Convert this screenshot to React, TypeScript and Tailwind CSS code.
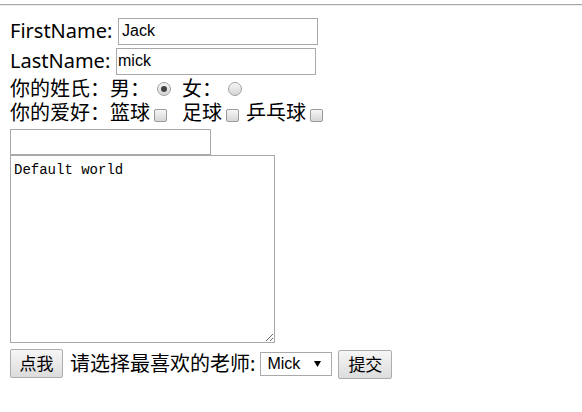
import React from 'react';

const cjk = '"Noto Sans", "Noto Sans CJK SC", sans-serif';

function Radio({ checked }: { checked?: boolean }) {
  return (
    <span className="flex h-[14px] w-[14px] shrink-0 items-center justify-center rounded-full border border-[#a0a0a0] bg-linear-to-b from-[#f6f6f6] to-[#d6d6d6]">
      {checked && <span className="block h-[6px] w-[6px] rounded-full bg-[#444]" />}
    </span>
  );
}

function Check() {
  return (
    <span className="mt-[4px] block h-[13px] w-[13px] shrink-0 rounded-[2px] border border-[#9a9a9a] bg-linear-to-b from-[#f6f6f6] to-[#d6d6d6]" />
  );
}

function Btn({ label, w }: { label: string; w: string }) {
  return (
    <button
      className={`${w} h-[29px] shrink-0 rounded-[2px] border border-[#acacac] bg-linear-to-b from-[#f6f6f6] to-[#dcdcdc] text-[17px] leading-none text-black`}
    >
      {label}
    </button>
  );
}

export default function App() {
  return (
    <div className="min-h-screen bg-white text-black" style={{ fontFamily: cjk }}>
      <div className="pt-[4px]">
        <div className="border-t border-b border-t-[#a9a9a9] border-b-[#ececec]" />
      </div>

      <form className="pl-[10px] pt-[10px] text-[20px]" onSubmit={e => e.preventDefault()}>
        <div className="flex h-[30px] items-center">
          <span className="w-[108px] shrink-0 leading-none">FirstName:</span>
          <input
            defaultValue="Jack"
            className="h-[27px] w-[200px] border border-[#a9a9a9] px-[3px] text-[16px] outline-none"
            style={{ fontFamily: '"Liberation Sans", Arial, sans-serif' }}
          />
        </div>
        <div className="flex h-[30px] items-center">
          <span className="w-[106px] shrink-0 leading-none">LastName:</span>
          <input
            defaultValue="mick"
            className="h-[27px] w-[200px] border border-[#a9a9a9] px-[1px] text-[16px] outline-none"
            style={{ fontFamily: '"Liberation Sans", Arial, sans-serif' }}
          />
        </div>

        <div className="flex h-[25px] items-center leading-none">
          <span>你的姓氏：男：</span>
          <span className="ml-[7px]"><Radio checked /></span>
          <span className="ml-[11px]">女：</span>
          <span className="ml-[6px]"><Radio /></span>
        </div>

        <div className="flex h-[24px] items-center leading-none">
          <span>你的爱好：篮球</span>
          <span className="ml-[4px]"><Check /></span>
          <span className="ml-[15px]">足球</span>
          <span className="ml-[4px]"><Check /></span>
          <span className="ml-[7px]">乒乓球</span>
          <span className="ml-[4px]"><Check /></span>
        </div>

        <input className="mt-[4px] block h-[26px] w-[201px] border border-[#a9a9a9] outline-none" />
        <textarea
          readOnly
          defaultValue="Default world"
          className="block h-[188px] w-[265px] border border-[#a9a9a9] px-[3px] pt-[6px] text-[14px] leading-[17px] outline-none"
          style={{ fontFamily: '"Liberation Mono", "Courier New", monospace', resize: 'both' }}
        />

        <div className="mt-[6px] flex h-[29px] items-center">
          <Btn label="点我" w="w-[53px]" />
          <span className="ml-[7px] leading-none">请选择最喜欢的老师:</span>
          <div
            className="ml-[5px] flex h-[24px] w-[72px] items-center justify-between border border-[#a9a9a9] bg-white pl-[6px] pr-[10px] text-[16px]"
            style={{ fontFamily: '"Liberation Sans", Arial, sans-serif' }}
          >
            <span>Mick</span>
            <svg width="7" height="6" viewBox="0 0 7 6">
              <path d="M0 0h7L3.5 6z" fill="#000" />
            </svg>
          </div>
          <span className="ml-[6px]"><Btn label="提交" w="w-[54px]" /></span>
        </div>
      </form>
    </div>
  );
}
